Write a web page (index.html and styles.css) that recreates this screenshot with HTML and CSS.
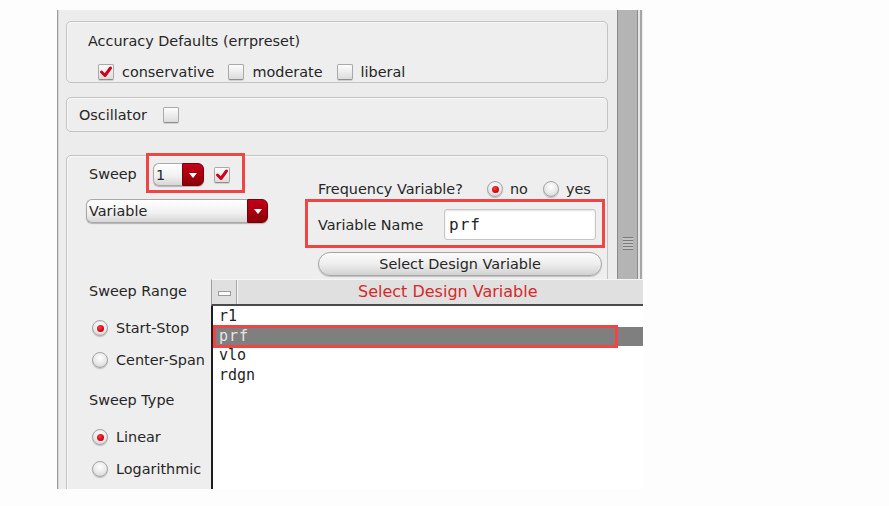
FILE: index.html
```html
<!DOCTYPE html>
<html>
<head>
<meta charset="utf-8">
<link rel="stylesheet" href="styles.css">
</head>
<body>
<div class="shot">
  <div class="window">
    <div class="panel">
      <div class="group acc">
        <div class="group-title">Accuracy Defaults (errpreset)</div>
        <div class="check-row">
          <span class="opt"><span class="cb checked"><svg viewBox="0 0 16 16"><path d="M3.5 8 L7 11.5 L12.5 4" /></svg></span>conservative</span>
          <span class="opt"><span class="cb"></span>moderate</span>
          <span class="opt"><span class="cb"></span>liberal</span>
        </div>
      </div>
      <div class="group osc">
        <span>Oscillator</span><span class="cb"></span>
      </div>
      <div class="group sweep">
        <div class="sweep-left">
          <div class="sweep-row1">
            <span class="sweep-label">Sweep</span>
            <div class="mark mark-sweep">
              <div class="combo combo-small"><span class="combo-text">1</span><span class="combo-btn"><i class="tri"></i></span></div>
              <span class="cb checked"><svg viewBox="0 0 16 16"><path d="M3.5 8 L7 11.5 L12.5 4" /></svg></span>
            </div>
          </div>
          <div class="combo combo-wide"><span class="combo-text">Variable</span><span class="combo-btn"><i class="tri"></i></span></div>
          <div class="label sweep-range">Sweep Range</div>
          <div class="radio-row r-start"><span class="rb on"></span>Start-Stop</div>
          <div class="radio-row r-next"><span class="rb"></span>Center-Span</div>
          <div class="label sweep-type">Sweep Type</div>
          <div class="radio-row r-start"><span class="rb on"></span>Linear</div>
          <div class="radio-row r-next"><span class="rb"></span>Logarithmic</div>
        </div>
        <div class="sweep-right">
          <div class="freq-row">
            <span class="freq-label">Frequency Variable?</span>
            <span class="rb on"></span><span class="rtext">no</span>
            <span class="rb yes"></span><span class="rtext">yes</span>
          </div>
          <div class="mark mark-var">
            <span>Variable Name</span>
            <div class="entry">prf</div>
          </div>
          <div class="pill">Select Design Variable</div>
        </div>
      </div>
    </div>
    <div class="scrollbar"><div class="grip"></div></div>
  </div>
  <div class="dialog">
    <div class="titlebar">
      <div class="minbtn"><i></i></div>
      <div class="title">Select Design Variable</div>
    </div>
    <div class="list">
      <div class="item">r1</div>
      <div class="item sel">prf<span class="sel-mark"></span></div>
      <div class="item">vlo</div>
      <div class="item">rdgn</div>
    </div>
  </div>
</div>
</body>
</html>
```
FILE: styles.css
```css
html, body {
  margin: 0;
  padding: 0;
  background: #fdfdfd;
}
body {
  font-family: "DejaVu Sans", "Liberation Sans", sans-serif;
  font-size: 14.4px;
  color: #262626;
}
.shot {
  position: relative;
  margin: 10px 0 0 57px;
  width: 586px;
  height: 479px;
  overflow: hidden;
}
.window {
  display: flex;
  height: 100%;
}
.panel {
  flex: 1;
  background: #ececec;
  border-left: 1px solid #9c9c9c;
  box-shadow: inset 1px 0 0 #d6d6d6;
  padding: 11px 9px 0 8px;
  overflow: hidden;
}
.group {
  border: 1px solid #c3c3c3;
  border-radius: 5px;
  background: #eeeeee;
  box-shadow: inset 1px 1px 0 #f8f8f8;
  box-sizing: border-box;
}
.acc {
  height: 62px;
  padding: 9px 0 0 21px;
}
.group-title {
  line-height: 20px;
}
.check-row {
  display: flex;
  align-items: center;
  margin: 12px 0 0 10px;
  height: 17px;
  gap: 14px;
}
.opt {
  display: flex;
  align-items: center;
  gap: 8px;
}
.cb {
  width: 16px;
  height: 16px;
  box-sizing: border-box;
  border: 1px solid #a9a9a9;
  border-bottom-color: #8e8e8e;
  border-radius: 2px;
  background: linear-gradient(#fdfdfd, #dcdcdc);
  box-shadow: 0 1px 0 #d0d0d0;
  display: inline-flex;
  flex: none;
}
.cb svg {
  width: 16px;
  height: 16px;
  margin: -1px;
}
.cb path {
  fill: none;
  stroke: #d0021b;
  stroke-width: 3;
  stroke-linecap: round;
  stroke-linejoin: round;
}
.osc {
  margin-top: 14px;
  height: 35px;
  display: flex;
  align-items: center;
  padding-left: 12px;
  gap: 16px;
}
.sweep {
  margin-top: 23px;
  height: 420px;
  display: grid;
  grid-template-columns: 238px 1fr;
  align-items: start;
}
.sweep-left {
  padding-left: 19px;
  display: flex;
  flex-direction: column;
  align-items: flex-start;
}
.sweep-row1 {
  display: flex;
  align-items: center;
  margin-top: -3px;
}
.sweep-label {
  width: 60px;
  padding: 2px 0 0 3px;
  box-sizing: border-box;
}
.mark {
  border: 3px solid #ef4545;
  display: flex;
  align-items: center;
}
.mark-sweep {
  padding: 7px 12px 4px 4px;
  gap: 10px;
}
.combo {
  display: flex;
  box-sizing: border-box;
  border-radius: 6px;
  box-shadow: 0 1px 1px rgba(0,0,0,0.25);
}
.combo-text {
  flex: 1;
  display: flex;
  align-items: center;
  border: 1px solid #a8a8a8;
  border-right: none;
  border-radius: 6px 0 0 6px;
  background: linear-gradient(#ffffff, #f0f0f0 60%, #d6d6d6);
  padding-left: 2px;
}
.combo-btn {
  display: flex;
  align-items: center;
  justify-content: center;
  border-radius: 0 6px 6px 0;
  background: linear-gradient(#c4001a, #a4000c 60%, #8a0008);
  border: 1px solid #7a0006;
}
.tri {
  width: 0;
  height: 0;
  border-left: 4px solid transparent;
  border-right: 4px solid transparent;
  border-top: 5px solid #ffffff;
  margin-top: 1px;
}
.combo-small {
  width: 51px;
  height: 23px;
}
.combo-small .combo-btn {
  width: 22px;
  box-sizing: border-box;
}
.combo-wide {
  width: 182px;
  height: 24px;
  margin-top: 6px;
}
.combo-wide .combo-btn {
  width: 21px;
  box-sizing: border-box;
}
.label {
  line-height: 20px;
  padding-left: 3px;
}
.sweep-range {
  margin-top: 58px;
}
.sweep-type {
  margin-top: 20px;
}
.radio-row {
  display: flex;
  align-items: center;
  height: 20px;
  gap: 8px;
  padding-left: 6px;
}
.r-start {
  margin-top: 17px;
}
.r-next {
  margin-top: 12px;
}
.rb {
  width: 16px;
  height: 16px;
  box-sizing: border-box;
  border-radius: 50%;
  border: 1px solid #a4a4a4;
  background: radial-gradient(circle at 50% 35%, #ffffff, #e8e8e8 55%, #c8c8c8);
  box-shadow: 0 1px 1px rgba(0,0,0,0.2);
  flex: none;
  display: inline-flex;
  align-items: center;
  justify-content: center;
}
.rb.on::after {
  content: "";
  width: 7px;
  height: 7px;
  border-radius: 50%;
  background: radial-gradient(circle at 40% 35%, #ff3a3a, #c8000e 70%);
}
.sweep-right {
  display: flex;
  flex-direction: column;
  align-items: flex-start;
}
.freq-row {
  margin-top: 23px;
  padding-left: 13px;
  height: 20px;
  display: flex;
  align-items: center;
}
.freq-label {
  width: 169px;
}
.rtext {
  margin-left: 7px;
}
.rb.yes {
  margin-left: 15px;
}
.mark-var {
  width: 300px;
  box-sizing: border-box;
  padding: 7px 6px 5px 10px;
  justify-content: space-between;
}
.entry {
  width: 152px;
  height: 31px;
  box-sizing: border-box;
  background: #ffffff;
  border: 1px solid #c6c6c6;
  border-radius: 3px;
  box-shadow: inset 0 1px 2px rgba(0,0,0,0.12);
  font-family: "DejaVu Sans Mono", "Liberation Mono", monospace;
  font-size: 16px;
  letter-spacing: 1px;
  line-height: 29px;
  padding-left: 4px;
  color: #222;
}
.pill {
  margin: 4px 0 0 13px;
  width: 284px;
  height: 24px;
  box-sizing: border-box;
  border: 1px solid #a6a6a6;
  border-radius: 12px;
  background: linear-gradient(#fbfbfb, #eeeeee 50%, #d2d2d2);
  box-shadow: 0 1px 1px rgba(0,0,0,0.2);
  display: flex;
  align-items: center;
  justify-content: center;
}
.scrollbar {
  width: 26px;
  height: 100%;
  background: linear-gradient(to right, #8a8a8a 0 1px, #b4b4b4 1px 20px, #8c8c8c 20px 21px, #e6e6e6 21px 23px, #a6a6a6 23px 25px, #ececec 25px);
}
.grip {
  margin: 227px 0 0 6px;
  width: 10px;
  height: 13px;
  background: repeating-linear-gradient(#7a7a7a 0 1px, #c4c4c4 1px 3px);
}
.dialog {
  position: absolute;
  left: 154px;
  top: 269px;
  width: 480px;
  bottom: 0;
  display: flex;
  flex-direction: column;
}
.titlebar {
  height: 27px;
  box-sizing: border-box;
  background: #e0e0e0;
  border-top: 1px solid #f6f6f6;
  border-left: 1px solid #a0a0a0;
  border-bottom: 2px solid #4a4a4a;
  display: flex;
}
.minbtn {
  width: 24px;
  border-right: 1px solid #a8a8a8;
  box-shadow: 1px 0 0 #f4f4f4;
  display: flex;
  align-items: center;
  justify-content: center;
}
.minbtn i {
  width: 11px;
  height: 3px;
  background: #fafafa;
  border: 1px solid #9a9a9a;
  margin-top: 2px;
}
.title {
  margin-left: 121px;
  color: #d42a2a;
  font-size: 16px;
  line-height: 24px;
}
.list {
  flex: 1;
  background: #ffffff;
  border-left: 2px solid #1e1e1e;
  padding-top: 1px;
  font-family: "DejaVu Sans Mono", "Liberation Mono", monospace;
  font-size: 15px;
  color: #1e1e1e;
}
.item {
  height: 19.5px;
  line-height: 19.5px;
  padding-left: 6px;
  position: relative;
}
.item.sel {
  background: #7f7f7f;
  color: #e6e6e6;
  letter-spacing: 1px;
}
.sel-mark {
  position: absolute;
  left: 0;
  top: -2px;
  width: 405px;
  bottom: -2px;
  border: 3px solid #ef4545;
  box-sizing: border-box;
}
```
